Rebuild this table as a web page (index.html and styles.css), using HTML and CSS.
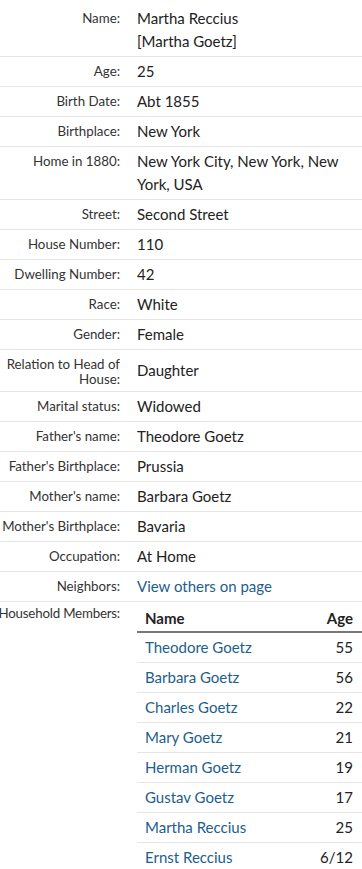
FILE: index.html
```html
<!DOCTYPE html>
<html lang="en">
<head>
<meta charset="utf-8">
<title>Record</title>
<link rel="stylesheet" href="styles.css">
</head>
<body>
<dl class="facts">
  <div class="row"><dt class="label">Name:</dt><dd class="value">Martha Reccius<br>[Martha Goetz]</dd></div>
  <div class="row"><dt class="label">Age:</dt><dd class="value">25</dd></div>
  <div class="row"><dt class="label">Birth Date:</dt><dd class="value">Abt 1855</dd></div>
  <div class="row"><dt class="label">Birthplace:</dt><dd class="value">New York</dd></div>
  <div class="row"><dt class="label">Home in 1880:</dt><dd class="value">New York City, New York, New York, USA</dd></div>
  <div class="row"><dt class="label">Street:</dt><dd class="value">Second Street</dd></div>
  <div class="row"><dt class="label">House Number:</dt><dd class="value">110</dd></div>
  <div class="row"><dt class="label">Dwelling Number:</dt><dd class="value">42</dd></div>
  <div class="row"><dt class="label">Race:</dt><dd class="value">White</dd></div>
  <div class="row"><dt class="label">Gender:</dt><dd class="value">Female</dd></div>
  <div class="row"><dt class="label">Relation to Head of House:</dt><dd class="value">Daughter</dd></div>
  <div class="row"><dt class="label">Marital status:</dt><dd class="value">Widowed</dd></div>
  <div class="row"><dt class="label">Father's name:</dt><dd class="value">Theodore Goetz</dd></div>
  <div class="row"><dt class="label">Father's Birthplace:</dt><dd class="value">Prussia</dd></div>
  <div class="row"><dt class="label">Mother's name:</dt><dd class="value">Barbara Goetz</dd></div>
  <div class="row"><dt class="label">Mother's Birthplace:</dt><dd class="value">Bavaria</dd></div>
  <div class="row"><dt class="label">Occupation:</dt><dd class="value">At Home</dd></div>
  <div class="row"><dt class="label">Neighbors:</dt><dd class="value"><a class="link" href="#">View others on page</a></dd></div>
  <div class="row household"><dt class="label"><span class="nowrap">Household Members:</span></dt>
    <dd class="value">
      <table class="members">
        <thead><tr><th class="c-name">Name</th><th class="c-age">Age</th></tr></thead>
        <tbody>
          <tr><td class="c-name"><a class="link" href="#">Theodore Goetz</a></td><td class="c-age">55</td></tr>
          <tr><td class="c-name"><a class="link" href="#">Barbara Goetz</a></td><td class="c-age">56</td></tr>
          <tr><td class="c-name"><a class="link" href="#">Charles Goetz</a></td><td class="c-age">22</td></tr>
          <tr><td class="c-name"><a class="link" href="#">Mary Goetz</a></td><td class="c-age">21</td></tr>
          <tr><td class="c-name"><a class="link" href="#">Herman Goetz</a></td><td class="c-age">19</td></tr>
          <tr><td class="c-name"><a class="link" href="#">Gustav Goetz</a></td><td class="c-age">17</td></tr>
          <tr><td class="c-name"><a class="link" href="#">Martha Reccius</a></td><td class="c-age">25</td></tr>
          <tr><td class="c-name"><a class="link" href="#">Ernst Reccius</a></td><td class="c-age">6/12</td></tr>
        </tbody>
      </table>
    </dd>
  </div>
</dl>
</body>
</html>
```

FILE: styles.css
```css
html, body {
  margin: 0;
  padding: 0;
  background: #fff;
}
body {
  font-family: Lato, "Liberation Sans", sans-serif;
  color: #222;
  overflow-x: hidden;
}
.facts {
  margin: 0;
  padding: 4px 0 0 0;
}
.row {
  display: flex;
  align-items: flex-start;
  gap: 17px;
  padding: 3px 0;
  border-bottom: 1px solid #e6e6e6;
}
.label {
  flex: 0 0 120px;
  width: 120px;
  min-width: 0;
  display: flex;
  justify-content: flex-end;
  text-align: right;
  font-size: 13.3px;
  line-height: 15px;
  padding: 4px 0 1px 0;
  color: #333;
}
.nowrap {
  white-space: nowrap;
  flex: none;
  letter-spacing: -0.2px;
}
.value {
  flex: 1;
  min-width: 0;
  align-self: center;
  margin: 0;
  font-size: 15px;
  line-height: 23px;
  color: #222;
}
.link {
  color: #1d5e8c;
  text-decoration: none;
}
.household {
  border-bottom: none;
}
.household .label {
  padding-top: 1px;
}
.household .value {
  align-self: flex-start;
}
.members {
  width: 100%;
  border-collapse: collapse;
  font-size: 15px;
}
.members th {
  font-weight: bold;
  color: #222;
  line-height: 23px;
  padding: 2px 9px 1px 8px;
  border-bottom: 2px solid #777;
}
.members td {
  line-height: 23px;
  padding: 3px 9px 3px 8px;
  border-bottom: 1px solid #e6e6e6;
}
.members tr:last-child td {
  border-bottom: none;
}
.c-name { text-align: left; }
.c-age { text-align: right; }
```
